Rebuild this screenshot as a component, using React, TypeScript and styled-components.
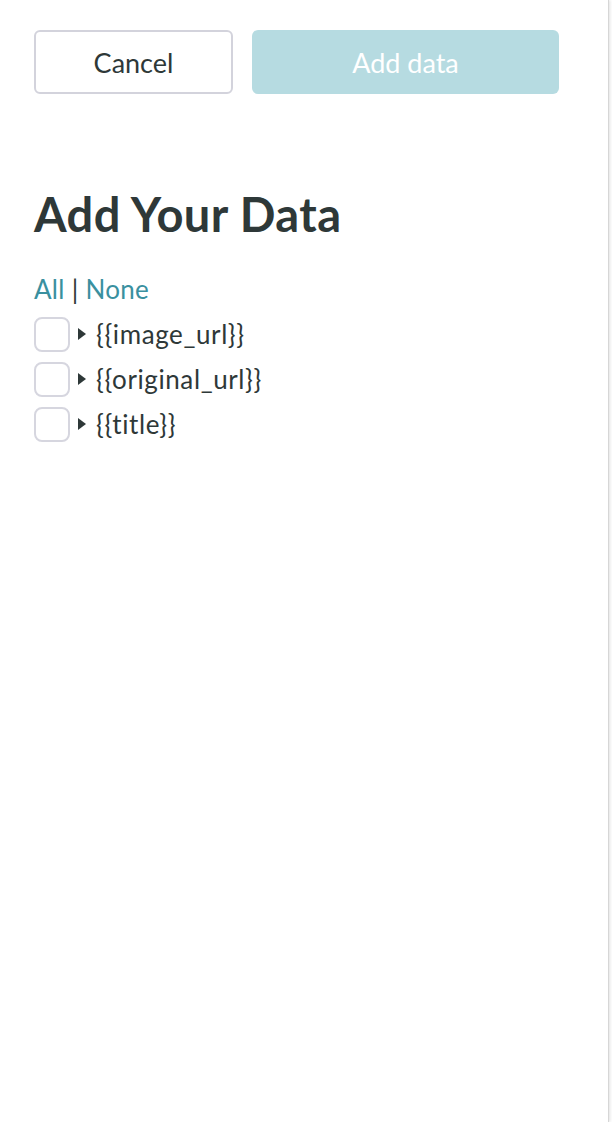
import * as React from 'react'
import styled, { createGlobalStyle } from 'styled-components'

const GlobalStyle = createGlobalStyle`
  html, body {
    margin: 0;
    padding: 0;
    background: #ffffff;
  }
  body {
    font-family: Lato, "Open Sans", "Liberation Sans", sans-serif;
    font-variant-ligatures: none;
    color: #2e3838;
  }
`

const Panel = styled.div`
  box-sizing: border-box;
  width: 609px;
  min-height: 1122px;
  padding: 30px 0 0 34px;
  border-right: 1px solid #d6d6d6;
  box-shadow: 1px 0 3px rgba(0, 0, 0, 0.12);
`

const Toolbar = styled.div`
  display: flex;
  gap: 19px;
`

const Button = styled.button<{ $primary?: boolean }>`
  box-sizing: border-box;
  height: 64px;
  width: ${p => (p.$primary ? '307px' : '199px')};
  border-radius: 6px;
  font-family: Lato, "Open Sans", "Liberation Sans", sans-serif;
  font-size: 27px;
  cursor: pointer;
  border: ${p => (p.$primary ? 'none' : '2px solid #d3d3dc')};
  background: ${p => (p.$primary ? '#b6dbe1' : '#ffffff')};
  color: ${p => (p.$primary ? '#ffffff' : '#2e3838')};
`

const Heading = styled.h1`
  margin: 92px 0 0;
  font-size: 47px;
  line-height: 1.2;
  font-weight: 700;
  letter-spacing: 0.45px;
  color: #2e3838;
`

const Picker = styled.div`
  margin-top: 32px;
  font-size: 26px;
  line-height: 1.2;
  letter-spacing: 0.3px;
`

const Link = styled.a`
  color: #3a909f;
  text-decoration: none;
  cursor: pointer;
`

const Rows = styled.div`
  margin-top: 6px;
`

const Row = styled.div`
  display: flex;
  align-items: center;
  height: 45px;
  font-size: 26px;
  letter-spacing: 0.6px;
`

const Check = styled.span`
  box-sizing: border-box;
  width: 36px;
  height: 35px;
  border: 2px solid #d6d6df;
  border-radius: 8px;
  background: #fff;
`

const Caret = styled.span`
  width: 0;
  height: 0;
  margin: 0 10px 0 8px;
  border-top: 6px solid transparent;
  border-bottom: 6px solid transparent;
  border-left: 8px solid #2e3838;
`

const fields = ['{{image_url}}', '{{original_url}}', '{{title}}']

export default function App() {
  return (
    <>
      <GlobalStyle />
      <Panel>
        <Toolbar>
          <Button>Cancel</Button>
          <Button $primary>Add data</Button>
        </Toolbar>
        <Heading>Add Your Data</Heading>
        <Picker>
          <Link>All</Link> | <Link>None</Link>
        </Picker>
        <Rows>
          {fields.map(f => (
            <Row key={f}>
              <Check />
              <Caret />
              <span>{f}</span>
            </Row>
          ))}
        </Rows>
      </Panel>
    </>
  )
}
